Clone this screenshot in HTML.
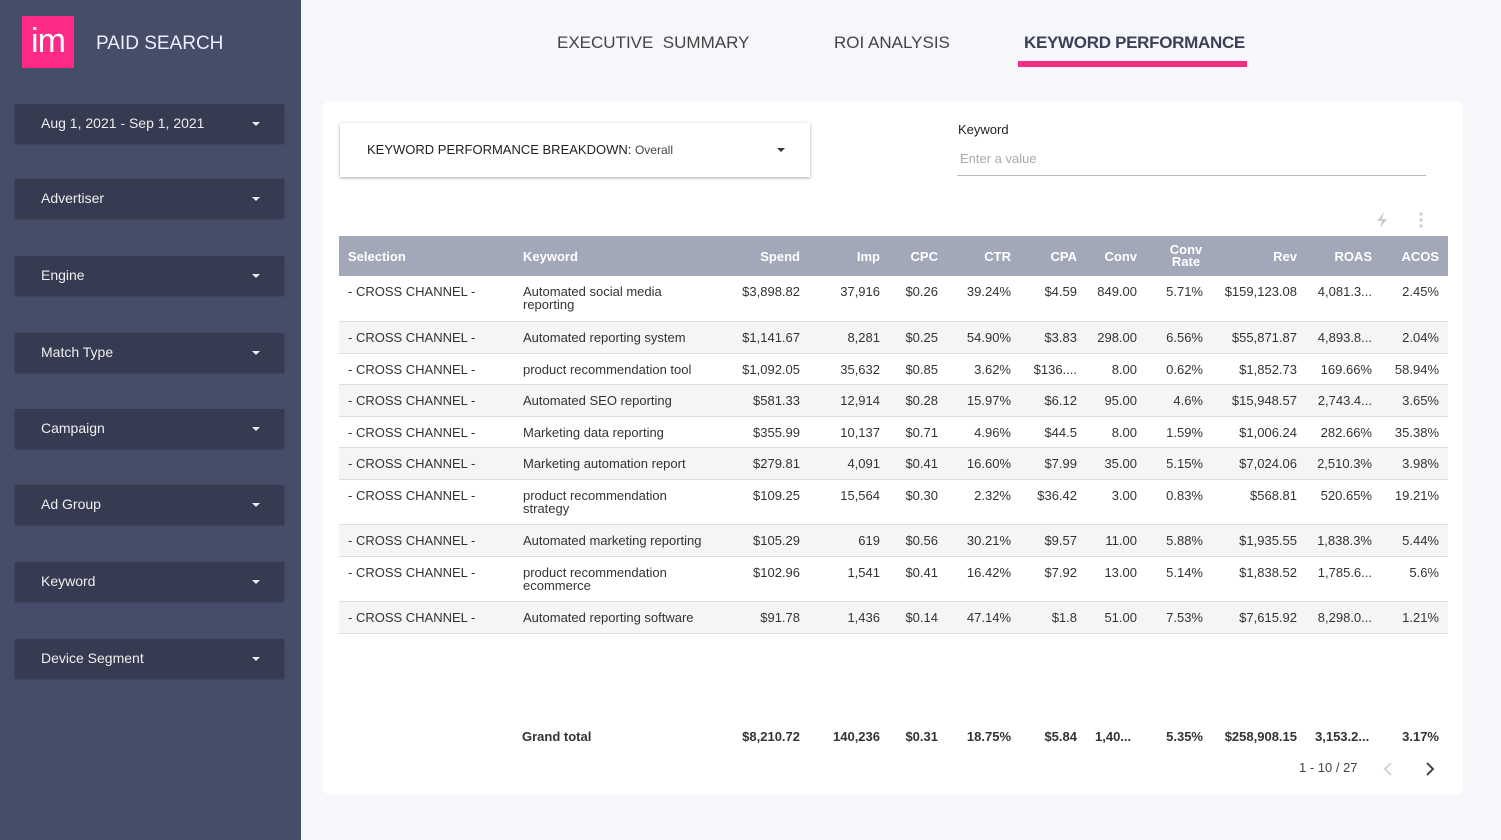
<!DOCTYPE html>
<html><head><meta charset="utf-8"><style>
*{box-sizing:border-box;margin:0;padding:0}
body{width:1501px;height:840px;background:#f6f7fa;font-family:"Liberation Sans",sans-serif;position:relative;overflow:hidden;color:#333}
.side{position:absolute;left:0;top:0;width:301px;height:840px;background:#464d68}
.logo{position:absolute;left:22px;top:16px;width:52px;height:52px;background:#fd2a86;color:#fff;font-size:34px;line-height:50px;text-align:center;letter-spacing:-1px}
.title{position:absolute;left:96px;top:33px;color:#eef;font-size:19px}
.dd{position:absolute;left:15px;width:269px;height:39px;background:#363b51;color:#eee;font-size:14px;line-height:39px;padding-left:26px;box-shadow:0 1px 2px rgba(0,0,0,.3)}
.dd:after{content:"";position:absolute;right:24px;top:18px;border:4px solid transparent;border-top-color:#eee;border-bottom:0}
.tab{position:absolute;top:33px;font-size:17px;color:#444}
.card{position:absolute;left:323px;top:101px;width:1140px;height:694px;background:#fff;border-radius:8px}
.sel{position:absolute;left:340px;top:123px;width:470px;height:54px;background:#fff;box-shadow:0 1px 3px rgba(0,0,0,.35);font-size:13px;line-height:54px;padding-left:27px;color:#222}
.sel:after{content:"";position:absolute;right:25px;top:25px;border:4px solid transparent;border-top-color:#333;border-bottom:0}
table{position:absolute;left:339px;top:236px;border-collapse:collapse;table-layout:fixed;width:1109px;font-size:13px}
th{background:#a3a8b8;color:#fff;height:40px;font-weight:bold;padding:0 9px;text-align:right}
td{padding:9px 9px 0;vertical-align:top;text-align:right;border-bottom:1px solid #ddd;color:#333;line-height:13px}
th:nth-child(1),th:nth-child(2),td:nth-child(1),td:nth-child(2){text-align:left}
tr.g td{background:#f5f5f5}
.gt{position:absolute;top:729px;font-size:13px;font-weight:bold;color:#333}
</style></head><body>
<div class="side">
<div class="logo">im</div>
<div class="title">PAID SEARCH</div>
<div class="dd" style="top:104px">Aug 1, 2021 - Sep 1, 2021</div>
<div class="dd" style="top:179px">Advertiser</div>
<div class="dd" style="top:256px">Engine</div>
<div class="dd" style="top:333px">Match Type</div>
<div class="dd" style="top:409px">Campaign</div>
<div class="dd" style="top:485px">Ad Group</div>
<div class="dd" style="top:562px">Keyword</div>
<div class="dd" style="top:639px">Device Segment</div>
</div>
<div class="tab" style="left:557px">EXECUTIVE&nbsp; SUMMARY</div>
<div class="tab" style="left:834px">ROI ANALYSIS</div>
<div class="tab" style="left:1024px;font-weight:bold;color:#3d4157;letter-spacing:-0.3px">KEYWORD PERFORMANCE</div>
<div style="position:absolute;left:1018px;top:61px;width:229px;height:6px;background:#fd2a86"></div>
<div class="card"></div>
<div class="sel">KEYWORD PERFORMANCE BREAKDOWN: <span style="font-size:12px;color:#444">Overall</span></div>
<div style="position:absolute;left:958px;top:122px;font-size:13px;color:#222">Keyword</div>
<div style="position:absolute;left:960px;top:151px;font-size:13px;color:#aaa">Enter a value</div>
<div style="position:absolute;left:957px;top:175px;width:469px;height:1px;background:#bbb"></div>
<svg style="position:absolute;left:1374px;top:211px" width="16" height="18" viewBox="0 0 16 18"><path d="M10 1 L3 10 H8 L6 17 L13 8 H8 Z" fill="#ccc"/></svg>
<svg style="position:absolute;left:1418px;top:211px" width="6" height="18"><circle cx="3" cy="3" r="1.6" fill="#ccc"/><circle cx="3" cy="9" r="1.6" fill="#ccc"/><circle cx="3" cy="15" r="1.6" fill="#ccc"/></svg>
<table>
<colgroup><col style="width:175px"><col style="width:206px"><col style="width:89px"><col style="width:80px"><col style="width:58px"><col style="width:73px"><col style="width:66px"><col style="width:60px"><col style="width:66px"><col style="width:94px"><col style="width:75px"><col style="width:67px"></colgroup>
<tr><th>Selection</th><th>Keyword</th><th>Spend</th><th>Imp</th><th>CPC</th><th>CTR</th><th>CPA</th><th>Conv</th><th style="text-align:center;line-height:12px;padding:0 0 0 14px">Conv<br>Rate</th><th>Rev</th><th>ROAS</th><th>ACOS</th></tr>
<tr style="height:45px"><td>- CROSS CHANNEL -</td><td>Automated social media<br>reporting</td><td>$3,898.82</td><td>37,916</td><td>$0.26</td><td>39.24%</td><td>$4.59</td><td>849.00</td><td>5.71%</td><td>$159,123.08</td><td>4,081.3...</td><td>2.45%</td></tr>
<tr class="g" style="height:32px"><td>- CROSS CHANNEL -</td><td>Automated reporting system</td><td>$1,141.67</td><td>8,281</td><td>$0.25</td><td>54.90%</td><td>$3.83</td><td>298.00</td><td>6.56%</td><td>$55,871.87</td><td>4,893.8...</td><td>2.04%</td></tr>
<tr style="height:31px"><td>- CROSS CHANNEL -</td><td>product recommendation tool</td><td>$1,092.05</td><td>35,632</td><td>$0.85</td><td>3.62%</td><td>$136....</td><td>8.00</td><td>0.62%</td><td>$1,852.73</td><td>169.66%</td><td>58.94%</td></tr>
<tr class="g" style="height:32px"><td>- CROSS CHANNEL -</td><td>Automated SEO reporting</td><td>$581.33</td><td>12,914</td><td>$0.28</td><td>15.97%</td><td>$6.12</td><td>95.00</td><td>4.6%</td><td>$15,948.57</td><td>2,743.4...</td><td>3.65%</td></tr>
<tr style="height:31px"><td>- CROSS CHANNEL -</td><td>Marketing data reporting</td><td>$355.99</td><td>10,137</td><td>$0.71</td><td>4.96%</td><td>$44.5</td><td>8.00</td><td>1.59%</td><td>$1,006.24</td><td>282.66%</td><td>35.38%</td></tr>
<tr class="g" style="height:32px"><td>- CROSS CHANNEL -</td><td>Marketing automation report</td><td>$279.81</td><td>4,091</td><td>$0.41</td><td>16.60%</td><td>$7.99</td><td>35.00</td><td>5.15%</td><td>$7,024.06</td><td>2,510.3%</td><td>3.98%</td></tr>
<tr style="height:45px"><td>- CROSS CHANNEL -</td><td>product recommendation<br>strategy</td><td>$109.25</td><td>15,564</td><td>$0.30</td><td>2.32%</td><td>$36.42</td><td>3.00</td><td>0.83%</td><td>$568.81</td><td>520.65%</td><td>19.21%</td></tr>
<tr class="g" style="height:32px"><td>- CROSS CHANNEL -</td><td>Automated marketing reporting</td><td>$105.29</td><td>619</td><td>$0.56</td><td>30.21%</td><td>$9.57</td><td>11.00</td><td>5.88%</td><td>$1,935.55</td><td>1,838.3%</td><td>5.44%</td></tr>
<tr style="height:45px"><td>- CROSS CHANNEL -</td><td>product recommendation<br>ecommerce</td><td>$102.96</td><td>1,541</td><td>$0.41</td><td>16.42%</td><td>$7.92</td><td>13.00</td><td>5.14%</td><td>$1,838.52</td><td>1,785.6...</td><td>5.6%</td></tr>
<tr class="g" style="height:32px"><td>- CROSS CHANNEL -</td><td>Automated reporting software</td><td>$91.78</td><td>1,436</td><td>$0.14</td><td>47.14%</td><td>$1.8</td><td>51.00</td><td>7.53%</td><td>$7,615.92</td><td>8,298.0...</td><td>1.21%</td></tr>
</table>
<div class="gt" style="left:522px">Grand total</div>
<div class="gt" style="right:701px">$8,210.72</div>
<div class="gt" style="right:621px">140,236</div>
<div class="gt" style="right:563px">$0.31</div>
<div class="gt" style="right:490px">18.75%</div>
<div class="gt" style="right:424px">$5.84</div>
<div class="gt" style="left:1095px">1,40...</div>
<div class="gt" style="right:298px">5.35%</div>
<div class="gt" style="right:204px">$258,908.15</div>
<div class="gt" style="left:1315px">3,153.2...</div>
<div class="gt" style="right:62px">3.17%</div>
<div style="position:absolute;left:1299px;top:760px;font-size:13px;color:#444">1 - 10 / 27</div>
<svg style="position:absolute;left:1382px;top:761px" width="12" height="16"><path d="M9 2 L3 8 L9 14" stroke="#ccc" stroke-width="1.6" fill="none"/></svg>
<svg style="position:absolute;left:1424px;top:761px" width="12" height="16"><path d="M3 2 L9 8 L3 14" stroke="#333" stroke-width="1.8" fill="none"/></svg>
</body></html>
